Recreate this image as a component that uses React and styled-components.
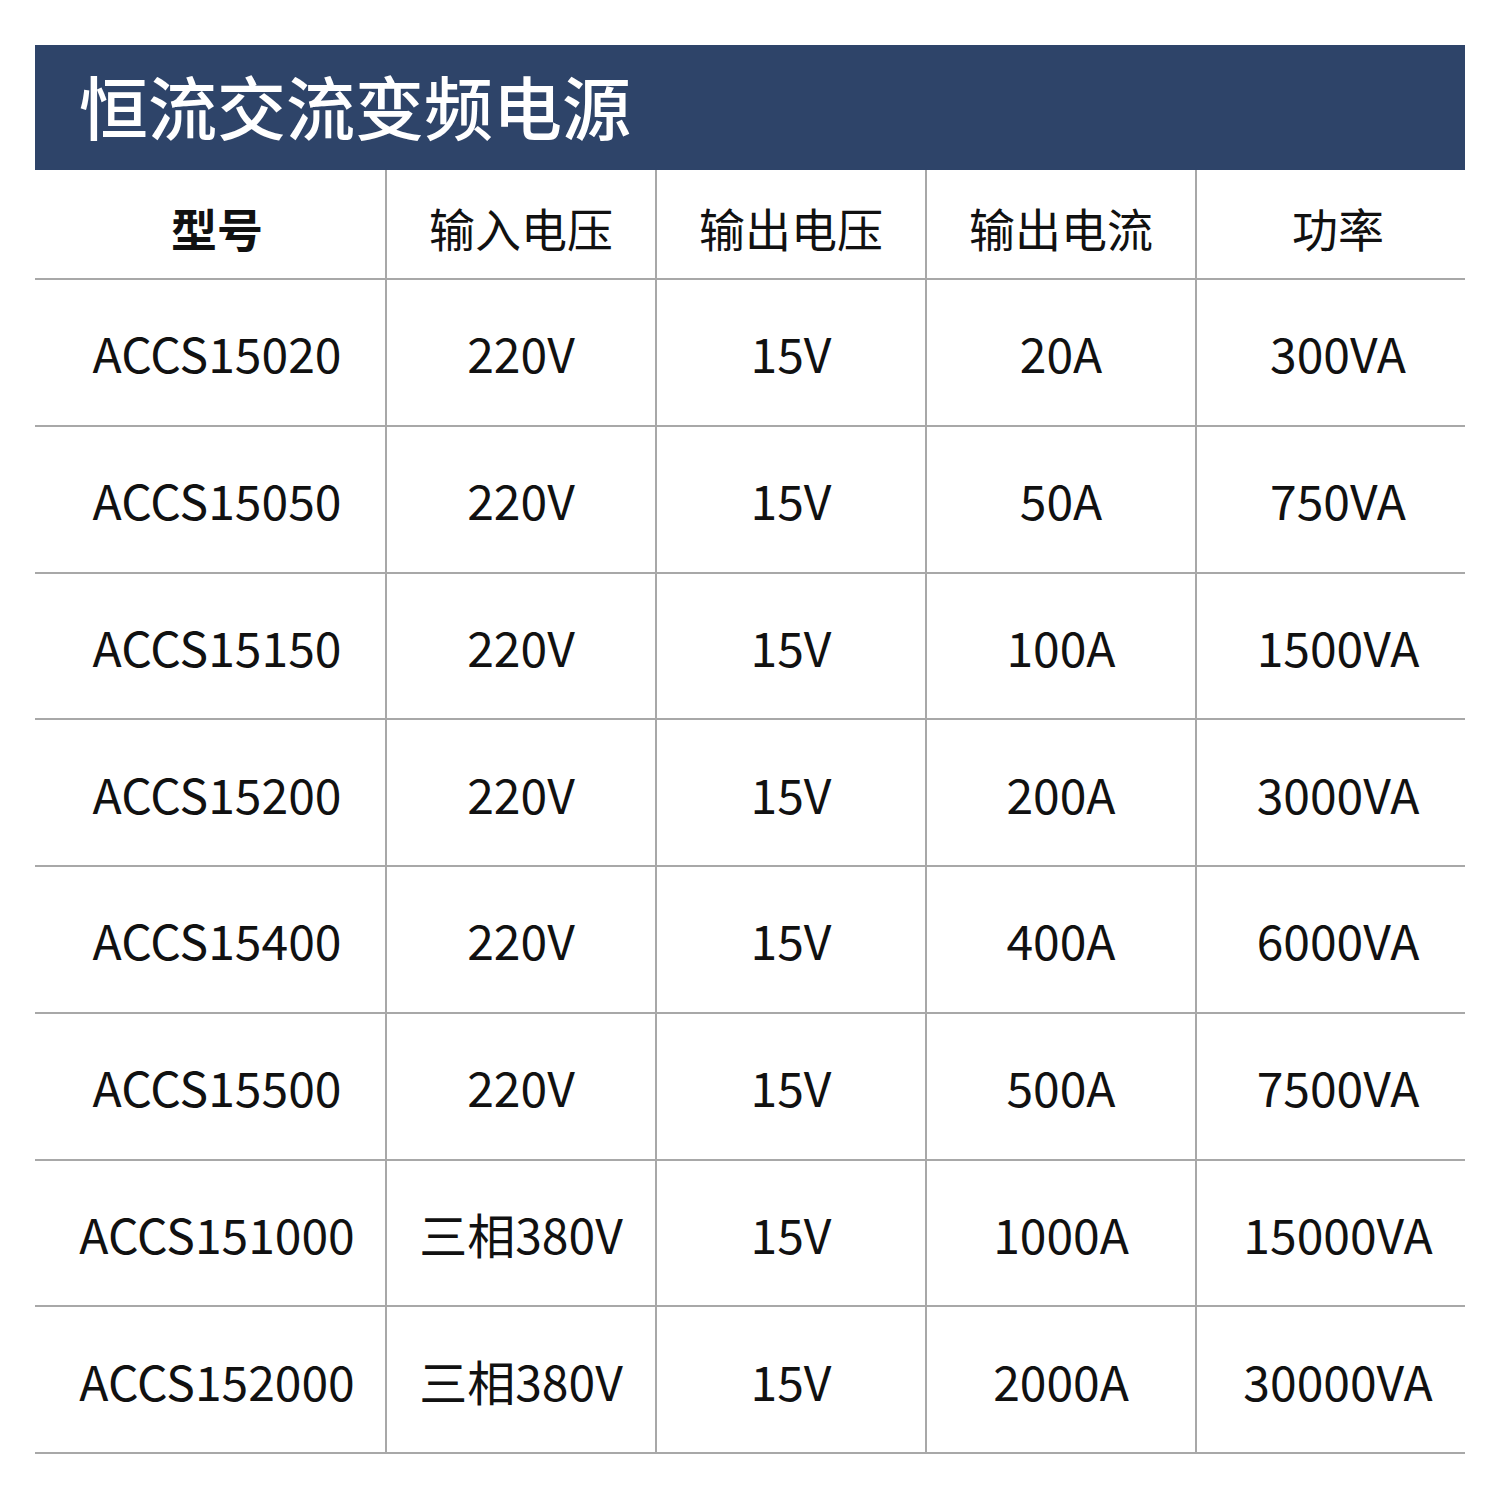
import React from "react";
import styled, { createGlobalStyle } from "styled-components";

const GlobalStyle = createGlobalStyle`
  html, body {
    margin: 0;
    padding: 0;
    background: #ffffff;
  }
  body {
    font-family: "Noto Sans CJK SC", "Noto Sans", sans-serif;
  }
`;

const Page = styled.div`
  width: 1500px;
  height: 1500px;
  padding: 45px 35px 0;
  box-sizing: border-box;
  background: #fff;
`;

const TitleBar = styled.div`
  height: 125px;
  background: #2e4469;
  display: flex;
  align-items: center;
  padding-left: 44px;
  box-sizing: border-box;
`;

const Title = styled.h1`
  margin: 0;
  color: #ffffff;
  font-family: "Noto Sans CJK SC", sans-serif;
  font-weight: 500;
  font-size: 69px;
  line-height: 1;
  transform: translateY(-2px);
`;

const Grid = styled.div`
  display: grid;
  grid-template-columns: 350px repeat(4, 270px);
`;

const Cell = styled.div`
  height: ${(p) => (p.$head ? "110px" : "146.75px")};
  box-sizing: border-box;
  display: flex;
  align-items: center;
  justify-content: center;
  border-bottom: 2px solid #a8a8a8;
  border-left: ${(p) => (p.$first ? "none" : "2px solid #a8a8a8")};
  font-family: "Noto Sans CJK SC", sans-serif;
  font-size: ${(p) => (p.$head ? "46px" : "48px")};
  font-weight: ${(p) => (p.$bold ? 700 : 400)};
  color: #111;
  white-space: nowrap;
  padding-top: ${(p) => (p.$head ? "6px" : "0")};
  padding-left: ${(p) => p.$shift || 0}px;
`;

const headers = ["型号", "输入电压", "输出电压", "输出电流", "功率"];
const shifts = [14, 0, 0, 0, 14];

const rows = [
  ["ACCS15020", "220V", "15V", "20A", "300VA"],
  ["ACCS15050", "220V", "15V", "50A", "750VA"],
  ["ACCS15150", "220V", "15V", "100A", "1500VA"],
  ["ACCS15200", "220V", "15V", "200A", "3000VA"],
  ["ACCS15400", "220V", "15V", "400A", "6000VA"],
  ["ACCS15500", "220V", "15V", "500A", "7500VA"],
  ["ACCS151000", "三相380V", "15V", "1000A", "15000VA"],
  ["ACCS152000", "三相380V", "15V", "2000A", "30000VA"],
];

export default function App() {
  return (
    <>
      <GlobalStyle />
      <Page>
        <TitleBar>
          <Title>恒流交流变频电源</Title>
        </TitleBar>
        <Grid>
          {headers.map((h, i) => (
            <Cell key={h} $head $bold={i === 0} $first={i === 0} $shift={shifts[i]}>
              {h}
            </Cell>
          ))}
          {rows.map((row) =>
            row.map((v, i) => (
              <Cell key={row[0] + i} $first={i === 0} $shift={shifts[i]}>
                {v}
              </Cell>
            ))
          )}
        </Grid>
      </Page>
    </>
  );
}
